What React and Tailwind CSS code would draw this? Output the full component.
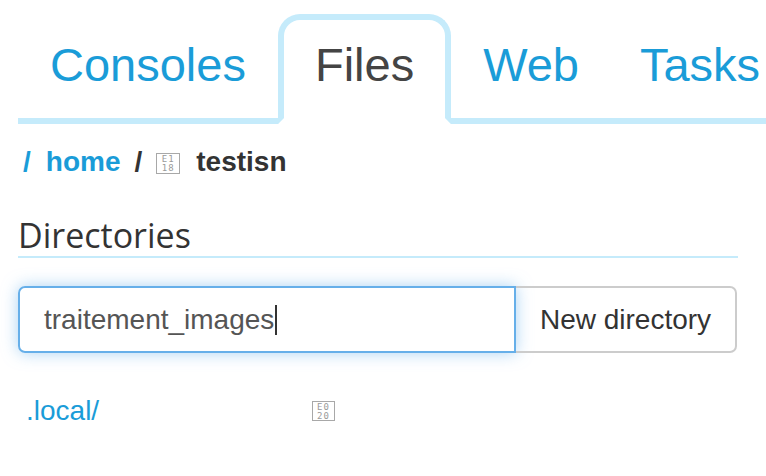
import React from "react";

function Tofu({ top, bottom, className = "" }) {
  return (
    <span
      className={
        "inline-flex flex-col items-center justify-center gap-[1px] border border-[#a8a8a8] text-[#9a9a9a] font-['DejaVu_Sans_Mono',monospace] text-[9px] leading-[8px] tracking-[1px] font-normal " +
        className
      }
    >
      <span>{top}</span>
      <span>{bottom}</span>
    </span>
  );
}

export default function App() {
  const tabs = ["Consoles", "Files", "Web", "Tasks"];
  return (
    <div className="w-[766px] h-[476px] overflow-hidden bg-white font-['Liberation_Sans',Arial,sans-serif]">
      <div className="pl-[18px]">
        {/* Tabs */}
        <div className="flex items-end w-[900px] pt-[14px] border-b-[6px] border-[#c5ebfb]">
          {tabs.map((t) =>
            t === "Files" ? (
              <div
                key={t}
                className="relative -mb-[6px] shrink-0 rounded-t-[22px] border-[6px] border-[#c5ebfb] border-b-white bg-white px-[31px] pt-[21px] pb-[30px] text-[47px] leading-[47px] text-[#444444]"
              >
                {t}
              </div>
            ) : t === "Tasks" ? (
              <div
                key={t}
                className="shrink-0 border-[6px] border-transparent border-b-0 pl-[23px] pr-[26px] pt-[21px] pb-[30px] text-[47px] leading-[47px] text-[#1a9cd8]"
              >
                {t}
              </div>
            ) : (
              <div
                key={t}
                className="shrink-0 border-[6px] border-transparent border-b-0 px-[26px] pt-[21px] pb-[30px] text-[47px] leading-[47px] text-[#1a9cd8]"
              >
                {t}
              </div>
            )
          )}
        </div>

        {/* Breadcrumb */}
        <div className="mt-[18px] flex items-center h-[40px] text-[28px] leading-[40px] font-bold">
          <span className="ml-[5px] text-[#1a9cd8]">/</span>
          <span className="ml-[15px] text-[#1a9cd8]">home</span>
          <span className="ml-[14px] text-[#333333]">/</span>
          <Tofu top="E1" bottom="18" className="ml-[14px] w-[24px] h-[21px] mt-[2px]" />
          <span className="ml-[16px] text-[#333333]">testisn</span>
        </div>

        {/* Directories heading */}
        <h2 className="mt-[33px] w-[720px] pb-[1px] border-b-2 border-[#c5ebfb] font-['Open_Sans',sans-serif] text-[34px] leading-[40px] text-[#333333]">
          Directories
        </h2>

        {/* Input group */}
        <div className="mt-[28px] flex w-[719px] h-[67px]">
          <div className="flex items-center w-[498px] h-full rounded-l-[7px] border-2 border-[#66afe9] pl-[24px] text-[28px] text-[#555555] shadow-[0_0_16px_rgba(102,175,233,0.55)]">
            <span>traitement_images</span>
            <span className="ml-[1px] w-[1.5px] h-[30px] bg-[#333]" />
          </div>
          <div className="flex items-center justify-center w-[221px] h-full rounded-r-[7px] border-2 border-l-0 border-[#cccccc] text-[28px] text-[#333333]">
            New directory
          </div>
        </div>

        {/* Listing */}
        <div className="mt-[38px] pl-[8px] grid grid-cols-[286px_auto] items-center h-[40px]">
          <span className="text-[28px] leading-[40px] text-[#1a9cd8]">.local/</span>
          <Tofu top="E0" bottom="20" className="w-[23px] h-[20px]" />
        </div>
      </div>
    </div>
  );
}
